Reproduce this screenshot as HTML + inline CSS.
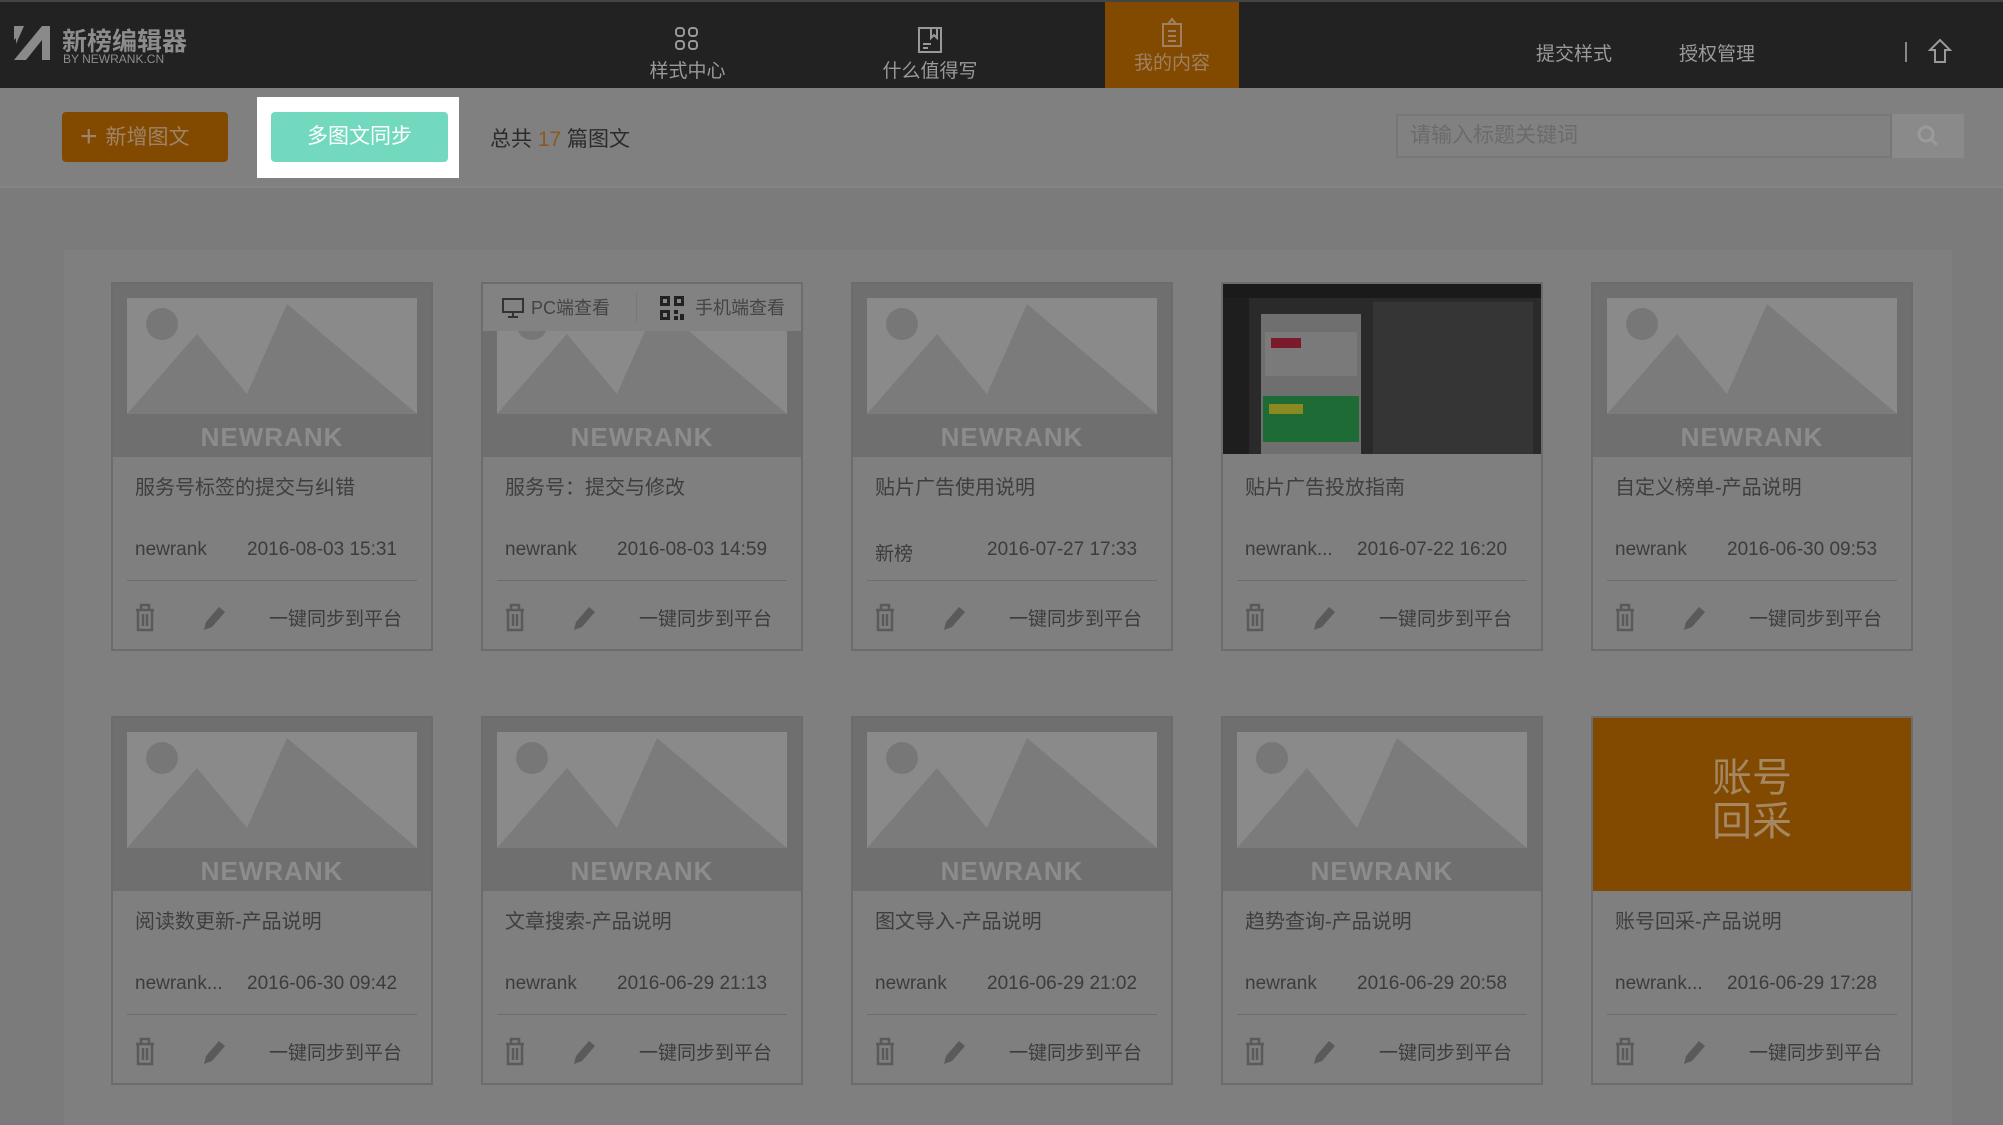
<!DOCTYPE html>
<html><head><meta charset="utf-8"><style>
*{margin:0;padding:0;box-sizing:border-box}
body{width:2003px;height:1125px;background:#7b7b7b;font-family:"Liberation Sans","Noto Sans CJK SC",sans-serif;position:relative;overflow:hidden}
.hdr{position:absolute;left:0;top:0;width:2003px;height:88px;background:#222;border-top:2px solid #444}
.logo{position:absolute;left:12px;top:22px;color:#8a8a8a}
.logo .t{position:absolute;left:50px;top:-2px;font-size:25px;font-weight:bold;white-space:nowrap;color:#8d8d8d}
.logo .s{position:absolute;left:51px;top:28px;font-size:12px;white-space:nowrap;color:#8d8d8d}
.nav{position:absolute;top:0;height:88px;text-align:center;color:#9a9a9a;font-size:19px}
.nav .lbl{position:absolute;left:0;right:0;top:54px}
.rnav{position:absolute;top:37px;color:#9a9a9a;font-size:19px}
.bar{position:absolute;left:0;top:88px;width:2003px;height:100px;background:#808080;border-bottom:2px solid #858585}
.panel{position:absolute;left:64px;top:250px;width:1888px;height:875px;background:#7f7f7f}
.card{position:absolute;width:322px;height:369px;background:#7f7f7f;border:2px solid #6c6c6c}
.img{position:absolute;left:0;top:0;width:318px;height:173px;background:#6f6f6f;overflow:hidden}
.img .pic{position:absolute;left:14px;top:14px;width:290px;height:116px;background:#8a8a8a;overflow:hidden}
.img .nr{position:absolute;left:0;right:0;top:138px;text-align:center;font-size:26px;font-weight:bold;color:#8c8c8c;letter-spacing:1px}
.ttl{position:absolute;left:22px;top:187px;font-size:20px;color:#3e3e3e;white-space:nowrap}
.meta{position:absolute;left:22px;top:255px;font-size:19px;color:#3c3c3c;white-space:nowrap;width:280px}
.meta .d{position:absolute;left:112px}
.hr{position:absolute;left:14px;right:14px;top:296px;height:1px;background:#6c6c6c}
.act{position:absolute;left:0;top:316px;width:318px;height:36px}
.sync{position:absolute;left:156px;top:4px;font-size:19px;color:#3c3c3c;white-space:nowrap}
</style></head><body>
<div class="hdr">
 <div class="logo">
  <svg width="40" height="38" viewBox="0 0 40 38"><path d="M2 2h10L4 20v-6L2 16z" fill="#8a8a8a"/><path d="M2 36L30 2h8v34h-8V16L14 36z" fill="#8a8a8a"/></svg>
  <div class="t">新榜编辑器</div><div class="s">BY NEWRANK.CN</div>
 </div>
 <div class="nav" style="left:625px;width:125px"><svg style="position:absolute;left:49px;top:24px" width="26" height="26" viewBox="0 0 26 26" fill="none" stroke="#999" stroke-width="2"><rect x="2" y="2" width="8" height="8" rx="3"/><rect x="15" y="2" width="8" height="8" rx="3"/><rect x="2" y="15" width="8" height="8" rx="3"/><rect x="15" y="15" width="8" height="8" rx="3"/></svg><div class="lbl">样式中心</div></div>
 <div class="nav" style="left:865px;width:130px"><svg style="position:absolute;left:52px;top:24px" width="26" height="28" viewBox="0 0 26 28" fill="none" stroke="#999" stroke-width="2"><rect x="2" y="2" width="22" height="24"/><path d="M14 2v10l3-3 3 3V2M6 18h8M6 22h5"/></svg><div class="lbl">什么值得写</div></div>
 <div class="nav" style="left:1105px;width:134px;background:#824a00;color:#a08060"><svg style="position:absolute;left:55px;top:14px" width="24" height="32" viewBox="0 0 24 32" fill="none" stroke="#a08060" stroke-width="2"><path d="M3 8h18v22H3zM8 8l4-5 4 5M8 15h8M8 20h8M8 25h8"/></svg><div class="lbl" style="top:46px">我的内容</div></div>
 <div class="rnav" style="left:1536px">提交样式</div>
 <div class="rnav" style="left:1679px">授权管理</div>
 <div style="position:absolute;left:1905px;top:40px;width:2px;height:20px;background:#888"></div>
 <svg style="position:absolute;left:1928px;top:36px" width="24" height="26" viewBox="0 0 24 26" fill="none" stroke="#999" stroke-width="2"><path d="M12 2L2 12h5v12h10V12h5z"/></svg>
</div>
<div class="bar">
 <div style="position:absolute;left:62px;top:24px;width:166px;height:50px;background:#824a00;border-radius:4px;color:#9f8468;font-size:21px;line-height:50px;padding-left:18px"><span style="font-size:30px;vertical-align:-2px;margin-right:8px">+</span>新增图文</div>
 <div style="position:absolute;left:257px;top:9px;width:202px;height:81px;background:#fff"></div>
 <div style="position:absolute;left:271px;top:24px;width:177px;height:50px;background:#72d9bf;border-radius:4px;color:#fff;font-size:21px;line-height:50px;text-align:center">多图文同步</div>
 <div style="position:absolute;left:490px;top:35px;font-size:21px;color:#2b2b2b">总共 <span style="color:#8a5a22">17</span> 篇图文</div>
 <div style="position:absolute;left:1396px;top:26px;width:496px;height:44px;border:2px solid #777;background:#818181;color:#6b6b6b;font-size:21px;line-height:40px;padding-left:12px">请输入标题关键词</div>
 <div style="position:absolute;left:1892px;top:26px;width:72px;height:44px;background:#8a8a8a"><svg style="position:absolute;left:24px;top:10px" width="24" height="24" viewBox="0 0 24 24" fill="none" stroke="#9a9a9a" stroke-width="3"><circle cx="10" cy="10" r="7"/><path d="M15 15l6 6"/></svg></div>
</div>
<div class="panel"></div>

<svg width="0" height="0" style="position:absolute"><defs>
<g id="mt"><circle cx="35" cy="26" r="16" fill="#777"/><path d="M0 116L70 36 120 96 160 6 290 116z" fill="#7b7b7b"/></g>
<g id="tr"><path d="M3 8h18M8 8V3h8v5M5 8v20h14V8M10 12v12M14 12v12" fill="none" stroke="#5a5a5a" stroke-width="2.5"/></g>
<g id="pn"><path d="M3 28l2-8 13-15 6 5-13 15z" fill="#5a5a5a"/></g>
</defs></svg>

<!-- row 1 -->
<div class="card" style="left:111px;top:282px"><div class="img"><div class="pic"><svg width="290" height="116"><use href="#mt"/></svg></div><div class="nr">NEWRANK</div></div><div class="ttl">服务号标签的提交与纠错</div><div class="meta">newrank<span class="d">2016-08-03 15:31</span></div><div class="hr"></div><div class="act"><svg style="position:absolute;left:20px;top:2px" width="24" height="30"><use href="#tr"/></svg><svg style="position:absolute;left:88px;top:2px" width="26" height="30"><use href="#pn"/></svg><div class="sync">一键同步到平台</div></div></div>
<div class="card" style="left:481px;top:282px"><div class="img"><div class="pic"><svg width="290" height="116"><use href="#mt"/></svg></div><div class="nr">NEWRANK</div><div style="position:absolute;left:0;top:0;width:318px;height:47px;background:#828282"><svg style="position:absolute;left:18px;top:12px" width="24" height="24" viewBox="0 0 24 24" fill="none" stroke="#333" stroke-width="2"><rect x="2" y="3" width="20" height="13"/><path d="M12 16v4M7 21h10"/></svg><span style="position:absolute;left:48px;top:10px;font-size:18px;color:#444">PC端查看</span><div style="position:absolute;left:153px;top:8px;width:1px;height:30px;background:#777"></div><svg style="position:absolute;left:176px;top:11px" width="26" height="26" viewBox="0 0 26 26"><path d="M1 1h10v10H1zM15 1h10v10H15zM1 15h10v10H1z" fill="#222"/><path d="M4 4h4v4H4zM18 4h4v4h-4zM4 18h4v4H4z" fill="#888"/><path d="M15 15h4v4h-4zM21 19h4v6h-4zM15 21h4v4h-4z" fill="#222"/></svg><span style="position:absolute;left:212px;top:10px;font-size:18px;color:#444">手机端查看</span></div></div><div class="ttl">服务号：提交与修改</div><div class="meta">newrank<span class="d">2016-08-03 14:59</span></div><div class="hr"></div><div class="act"><svg style="position:absolute;left:20px;top:2px" width="24" height="30"><use href="#tr"/></svg><svg style="position:absolute;left:88px;top:2px" width="26" height="30"><use href="#pn"/></svg><div class="sync">一键同步到平台</div></div></div>
<div class="card" style="left:851px;top:282px"><div class="img"><div class="pic"><svg width="290" height="116"><use href="#mt"/></svg></div><div class="nr">NEWRANK</div></div><div class="ttl">贴片广告使用说明</div><div class="meta">新榜<span class="d">2016-07-27 17:33</span></div><div class="hr"></div><div class="act"><svg style="position:absolute;left:20px;top:2px" width="24" height="30"><use href="#tr"/></svg><svg style="position:absolute;left:88px;top:2px" width="26" height="30"><use href="#pn"/></svg><div class="sync">一键同步到平台</div></div></div>
<div class="card" style="left:1221px;top:282px"><div class="img" style="background:#2a2a2a;height:170px"><div style="position:absolute;left:0;top:0;width:318px;height:14px;background:#1a1a1a"></div><div style="position:absolute;left:0;top:14px;width:26px;height:156px;background:#1e1e1e"></div><div style="position:absolute;left:38px;top:30px;width:100px;height:140px;background:#6f6f6f"></div><div style="position:absolute;left:42px;top:48px;width:92px;height:44px;background:#7a7a7a"></div><div style="position:absolute;left:48px;top:54px;width:30px;height:10px;background:#7a1a2a"></div><div style="position:absolute;left:40px;top:112px;width:96px;height:46px;background:#1f6b35"></div><div style="position:absolute;left:46px;top:120px;width:34px;height:10px;background:#8a8a20"></div><div style="position:absolute;left:150px;top:18px;width:160px;height:152px;background:#353535"></div></div><div class="ttl">贴片广告投放指南</div><div class="meta">newrank...<span class="d">2016-07-22 16:20</span></div><div class="hr"></div><div class="act"><svg style="position:absolute;left:20px;top:2px" width="24" height="30"><use href="#tr"/></svg><svg style="position:absolute;left:88px;top:2px" width="26" height="30"><use href="#pn"/></svg><div class="sync">一键同步到平台</div></div></div>
<div class="card" style="left:1591px;top:282px"><div class="img"><div class="pic"><svg width="290" height="116"><use href="#mt"/></svg></div><div class="nr">NEWRANK</div></div><div class="ttl">自定义榜单-产品说明</div><div class="meta">newrank<span class="d">2016-06-30 09:53</span></div><div class="hr"></div><div class="act"><svg style="position:absolute;left:20px;top:2px" width="24" height="30"><use href="#tr"/></svg><svg style="position:absolute;left:88px;top:2px" width="26" height="30"><use href="#pn"/></svg><div class="sync">一键同步到平台</div></div></div>

<!-- row 2 -->
<div class="card" style="left:111px;top:716px"><div class="img"><div class="pic"><svg width="290" height="116"><use href="#mt"/></svg></div><div class="nr">NEWRANK</div></div><div class="ttl">阅读数更新-产品说明</div><div class="meta">newrank...<span class="d">2016-06-30 09:42</span></div><div class="hr"></div><div class="act"><svg style="position:absolute;left:20px;top:2px" width="24" height="30"><use href="#tr"/></svg><svg style="position:absolute;left:88px;top:2px" width="26" height="30"><use href="#pn"/></svg><div class="sync">一键同步到平台</div></div></div>
<div class="card" style="left:481px;top:716px"><div class="img"><div class="pic"><svg width="290" height="116"><use href="#mt"/></svg></div><div class="nr">NEWRANK</div></div><div class="ttl">文章搜索-产品说明</div><div class="meta">newrank<span class="d">2016-06-29 21:13</span></div><div class="hr"></div><div class="act"><svg style="position:absolute;left:20px;top:2px" width="24" height="30"><use href="#tr"/></svg><svg style="position:absolute;left:88px;top:2px" width="26" height="30"><use href="#pn"/></svg><div class="sync">一键同步到平台</div></div></div>
<div class="card" style="left:851px;top:716px"><div class="img"><div class="pic"><svg width="290" height="116"><use href="#mt"/></svg></div><div class="nr">NEWRANK</div></div><div class="ttl">图文导入-产品说明</div><div class="meta">newrank<span class="d">2016-06-29 21:02</span></div><div class="hr"></div><div class="act"><svg style="position:absolute;left:20px;top:2px" width="24" height="30"><use href="#tr"/></svg><svg style="position:absolute;left:88px;top:2px" width="26" height="30"><use href="#pn"/></svg><div class="sync">一键同步到平台</div></div></div>
<div class="card" style="left:1221px;top:716px"><div class="img"><div class="pic"><svg width="290" height="116"><use href="#mt"/></svg></div><div class="nr">NEWRANK</div></div><div class="ttl">趋势查询-产品说明</div><div class="meta">newrank<span class="d">2016-06-29 20:58</span></div><div class="hr"></div><div class="act"><svg style="position:absolute;left:20px;top:2px" width="24" height="30"><use href="#tr"/></svg><svg style="position:absolute;left:88px;top:2px" width="26" height="30"><use href="#pn"/></svg><div class="sync">一键同步到平台</div></div></div>
<div class="card" style="left:1591px;top:716px"><div class="img" style="background:#824a00"><div style="position:absolute;left:0;right:0;top:38px;text-align:center;font-size:40px;line-height:44px;color:#a58762">账号<br>回采</div></div><div class="ttl">账号回采-产品说明</div><div class="meta">newrank...<span class="d">2016-06-29 17:28</span></div><div class="hr"></div><div class="act"><svg style="position:absolute;left:20px;top:2px" width="24" height="30"><use href="#tr"/></svg><svg style="position:absolute;left:88px;top:2px" width="26" height="30"><use href="#pn"/></svg><div class="sync">一键同步到平台</div></div></div>
</body></html>
